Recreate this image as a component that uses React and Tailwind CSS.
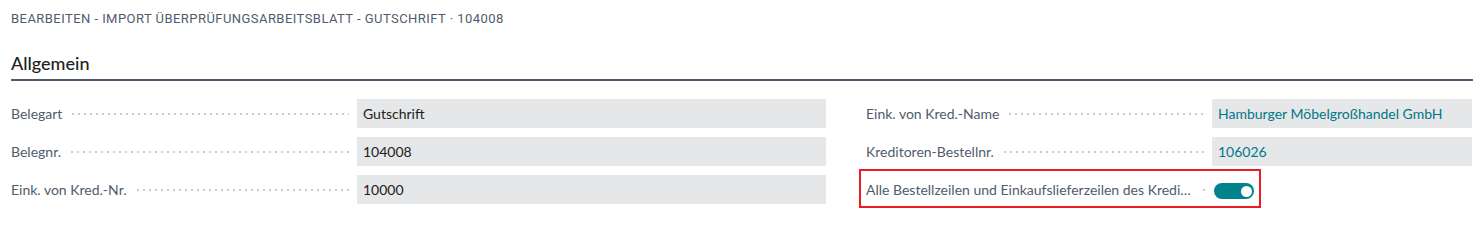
import React from "react";

const dots =
  "flex-1 self-center h-[2px] mx-[8px] bg-[radial-gradient(circle,#c9ccd0_0.9px,transparent_1.1px)] bg-[length:6px_2px] bg-repeat-x";

function Field({ label, value, link }) {
  return (
    <div className="flex items-center h-[29px]">
      <div className="w-[346px] flex items-center pr-[0px]">
        <span className="whitespace-nowrap text-[14px] text-[#505c6d]">{label}</span>
        <div className={dots} />
      </div>
      <div
        className={
          "flex-1 h-[29px] bg-[#e6e7e8] flex items-center px-[6px] text-[14px] " +
          (link ? "text-[#00778a]" : "text-[#212121]")
        }
      >
        {value}
      </div>
    </div>
  );
}

export default function App() {
  return (
    <div className="w-[1473px] h-[241px] bg-white overflow-hidden font-['Segoe_UI','Lato','Noto_Sans',sans-serif]">
      <div className="pl-[11px] pt-[10px] h-[17px] text-[13px] leading-[17px] font-normal tracking-[0.45px] text-[#505c6d] font-['Roboto',sans-serif] whitespace-nowrap">
        BEARBEITEN - IMPORT ÜBERPRÜFUNGSARBEITSBLATT - GUTSCHRIFT · 104008
      </div>
      <div className="ml-[11px] mt-[35px]">
        <div className="text-[18px] leading-[23px] text-[#212121] font-medium">Allgemein</div>
        <div className="mt-[4px] h-[2px] bg-[#505c6d]" />
      </div>
      <div className="pl-[11px] pr-[1px] mt-[18px] grid grid-cols-[815px_1fr] gap-x-[40px] gap-y-[9px]">
        <Field label="Belegart" value="Gutschrift" />
        <Field label="Eink. von Kred.-Name" value="Hamburger Möbelgroßhandel GmbH" link />
        <Field label="Belegnr." value="104008" />
        <Field label="Kreditoren-Bestellnr." value="106026" link />
        <Field label="Eink. von Kred.-Nr." value="10000" />
        <div className="relative flex items-center h-[29px]">
          <div className="w-[348px] flex items-center">
            <span className="whitespace-nowrap truncate max-w-[327px] text-[14px] text-[#505c6d]">
              Alle Bestellzeilen und Einkaufslieferzeilen des Kreditors anzeigen
            </span>
            <div className={dots} />
          </div>
          <div className="mt-[3px] w-[40px] h-[16px] rounded-full bg-[#00838a] flex items-center justify-end pr-[2px]">
            <div className="w-[11px] h-[11px] rounded-full bg-white" />
          </div>
          <div className="absolute left-[-7px] top-[-6px] w-[402px] h-[39px] border-2 border-[#ec1c24]" />
        </div>
      </div>
    </div>
  );
}
